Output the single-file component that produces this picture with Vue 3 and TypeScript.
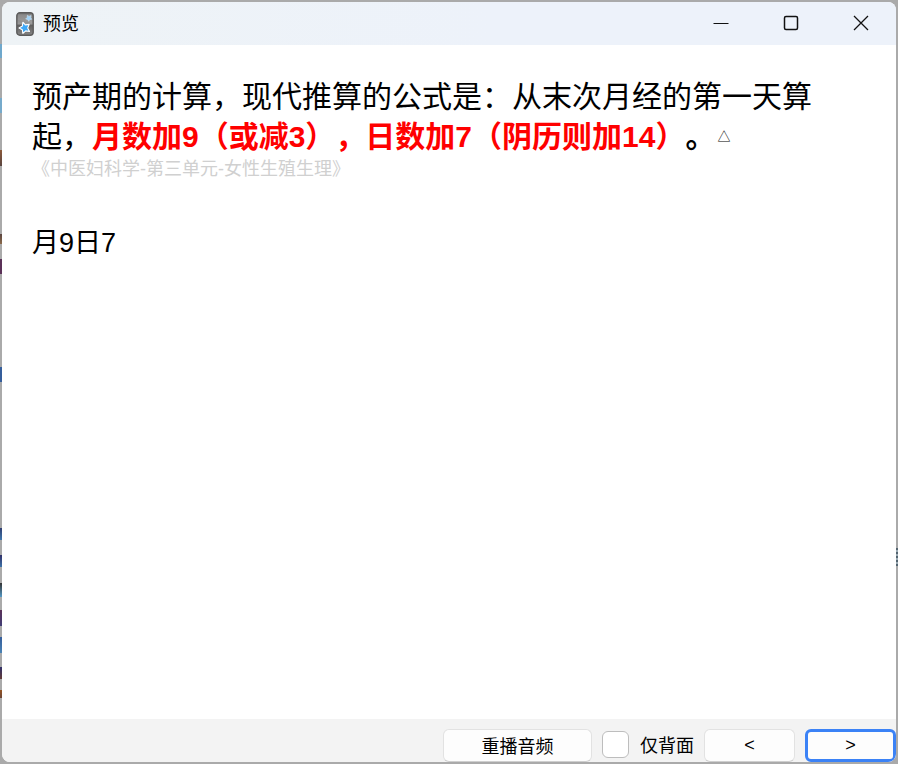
<script setup lang="ts">
import { ref } from 'vue'

const backOnly = ref(false)
</script>

<template>
  <div class="desktop">
    <main class="window">
      <header class="titlebar">
        <svg class="logo" viewBox="0 0 18 24" aria-hidden="true">
          <defs>
            <linearGradient id="card" x1="0" y1="0" x2="0" y2="1">
              <stop offset="0" stop-color="#777" />
              <stop offset="0.5" stop-color="#999" />
              <stop offset="0.55" stop-color="#606060" />
              <stop offset="1" stop-color="#858585" />
            </linearGradient>
          </defs>
          <rect x="0.8" y="0.8" width="16.4" height="22.4" rx="3" fill="url(#card)" stroke="#5c5c5c" stroke-width="1.4" />
          <path d="M2 2.5H16V11L2 8Z" fill="#aaa" opacity="0.35" />
          <path d="M6.9 10.2 9.3 12.9 13.2 12.4 11.7 16 13.5 19.5 9.7 18.9 6.9 21.4 6.3 17.7 3 15.9 6.3 14.1Z" fill="#3fa9f8" stroke="#fff" stroke-width="1.1" stroke-linejoin="round" />
          <path d="M11.4 3.3 13 4.4 15 3.6 14.6 5.7 15.8 7.3 13.7 7.6 12.7 9.3 11.7 7.4 9.7 6.9 11.2 5.4Z" fill="#9fd2f8" stroke="#c4e2f7" stroke-width="0.6" stroke-linejoin="round" />
        </svg>
        <h1>预览</h1>
        <div class="controls">
          <button type="button" aria-label="最小化">
            <svg viewBox="0 0 16 16"><path d="M0.5 8.5H15.5" /></svg>
          </button>
          <button type="button" aria-label="最大化">
            <svg viewBox="0 0 16 16"><rect x="1.5" y="1.5" width="13" height="13" rx="1.5" stroke-width="1.5" /></svg>
          </button>
          <button type="button" aria-label="关闭">
            <svg viewBox="0 0 16 16"><path d="M1 1 15 15M15 1 1 15" stroke-width="1.3" /></svg>
          </button>
        </div>
      </header>

      <article class="card">
        <p class="question">预产期的计算，现代推算的公式是：从末次月经的第一天算起，<strong>月数加9（或减3），日数加7（阴历则加14）</strong><b>。</b><span class="mark">△</span></p>
        <p class="source">《中医妇科学-第三单元-女性生殖生理》</p>
        <p class="answer">月9日7</p>
      </article>

      <footer class="actions">
        <button type="button" class="btn replay">重播音频</button>
        <label class="check"><input v-model="backOnly" type="checkbox" /><span>仅背面</span></label>
        <button type="button" class="btn">&lt;</button>
        <button type="button" class="btn primary">&gt;</button>
      </footer>
    </main>
  </div>
</template>

<style>
body {
  margin: 0;
}
</style>

<style scoped>
* {
  box-sizing: border-box;
}

.desktop {
  display: flex;
  min-height: 100vh;
  padding: 2px;
  background:
    linear-gradient(#2f3d70, #4179ae) 0 528px / 2px 12px no-repeat,
    linear-gradient(#303069, #3e73a8) 0 555px / 2px 12px no-repeat,
    linear-gradient(#333, #5599c5) 0 583px / 2px 14px no-repeat,
    linear-gradient(#5b3158, #403d75) 0 610px / 2px 16px no-repeat,
    linear-gradient(#355e9b, #4a83b5) 0 637px / 2px 16px no-repeat,
    linear-gradient(#303069, #633c38) 0 667px / 2px 12px no-repeat,
    linear-gradient(#945423, #6c4637) 0 690px / 2px 8px no-repeat,
    linear-gradient(#6fa8cc, #6fa8cc) 0 44px / 2px 14px no-repeat,
    linear-gradient(#76aacb, #76aacb) 0 98px / 2px 15px no-repeat,
    linear-gradient(#8b5a3a, #5a4540) 0 150px / 2px 16px no-repeat,
    linear-gradient(#5a4540, #8b6a4a) 0 234px / 2px 10px no-repeat,
    linear-gradient(#5b3158, #5b3158) 0 259px / 2px 15px no-repeat,
    linear-gradient(#355e9b, #355e9b) 0 367px / 2px 15px no-repeat,
    repeating-linear-gradient(#536470 0 2px, #9cabb4 2px 4px) right 548px / 2px 18px no-repeat,
    #aaa;
  color: #000;
  font-family: "Liberation Sans", "Noto Sans CJK SC", sans-serif;
  text-spacing-trim: space-all;
}

.window {
  display: flex;
  flex: 1;
  flex-direction: column;
  overflow: hidden;
  border-radius: 8px;
  background: #fff;
}

.titlebar {
  display: flex;
  align-items: center;
  height: 43px;
  padding-left: 14px;
  background: linear-gradient(90deg, #eef3f6, #edf2fa 55%);
}

.logo {
  width: 18px;
  height: 24px;
}

h1 {
  margin: 0 0 0 9px;
  font-size: 18px;
  font-weight: 400;
  line-height: 24px;
}

.controls {
  display: flex;
  align-self: stretch;
  margin-left: auto;
}

.controls button {
  display: grid;
  place-items: center;
  width: 70px;
  padding: 0 0 2px;
  border: 0;
  background: none;
}

.controls svg {
  width: 16px;
  height: 16px;
  fill: none;
  stroke: #111;
}

.card {
  flex: 1;
  padding: 32px 30px;
}

.card p {
  margin: 0;
}

.question {
  font-size: 30px;
  line-height: 40px;
}

.question strong {
  color: #f00;
}

.mark {
  margin-left: 2px;
  font-size: 13px;
  line-height: 1;
  vertical-align: 6px;
}

.source {
  color: #d0d0d0;
  font-size: 18px;
  line-height: 24px;
}

.card .answer {
  margin-top: 44px;
  font-size: 27px;
  line-height: 36px;
}

.actions {
  display: flex;
  align-items: flex-start;
  justify-content: flex-end;
  gap: 10px;
  height: 43px;
  padding-top: 10px;
  background: #f3f3f3;
  font-size: 18px;
}

.btn {
  width: 91px;
  height: 33px;
  padding: 0;
  border: 1px solid #e2e2e2;
  border-bottom-color: #cfcfcf;
  border-radius: 6px;
  background: #fdfdfd;
  color: #000;
  font: inherit;
  font-size: 18px;
}

.replay {
  width: 149px;
  padding-bottom: 2px;
}

.primary {
  border: 3px solid #3b82f6;
}

.check {
  display: flex;
  align-items: center;
  gap: 11px;
  height: 30px;
}

.check input {
  width: 27px;
  height: 27px;
  margin: 0;
  appearance: none;
  border: 1px solid #bdbdbd;
  border-radius: 6px;
  background: #fff;
}

.check input:checked {
  background: #3b82f6;
}
</style>
